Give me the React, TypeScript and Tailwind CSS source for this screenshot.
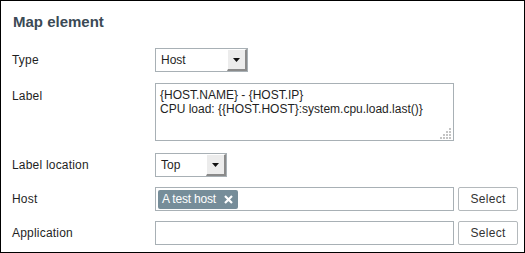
import * as React from 'react';

function Dropdown({ value, width }: { value: string; width: string }) {
	return (
		<div
			className={`flex h-[24px] ${width} border border-[#a8b0b5] bg-white items-stretch`}
		>
			<span className="flex-1 pl-[5px] leading-[22px] text-[#1f1f1f]">
				{value}
			</span>
			<span className="w-[20px] flex items-center justify-center bg-[#ececec] border-r-2 border-b-2 border-[#8a8a8a] border-l border-t border-l-white border-t-white">
				<svg width="7" height="4" viewBox="0 0 7 4">
					<path d="M0 0h7L3.5 4z" fill="#111" />
				</svg>
			</span>
		</div>
	);
}

function Row({
	label,
	children,
	top = false,
	className = '',
}: {
	label: string;
	children: React.ReactNode;
	top?: boolean;
	className?: string;
}) {
	return (
		<div className={`flex ${top ? 'items-start' : 'items-center'} ${className}`}>
			<div
				className={`w-[143px] text-[#1f1f1f] tracking-[0.2px] ${top ? 'pt-[4px]' : ''}`}
			>
				{label}
			</div>
			{children}
		</div>
	);
}

function SelectButton() {
	return (
		<button className="ml-[4px] w-[60px] h-[24px] border border-[#b4b9bc] rounded-[2px] bg-white text-[#333] tracking-[0.3px]">
			Select
		</button>
	);
}

export default function App() {
	return (
		<div
			className="w-[525px] h-[253px] border border-black bg-white pl-[11px] text-[12px] overflow-hidden"
			style={{ fontFamily: '"Liberation Sans", Arial, sans-serif' }}
		>
			{/* Header */}
			<h2 className="mt-[12px] pl-[1px] text-[15px] font-bold text-[#3b4a55] leading-[18px]">
				Map element
			</h2>

			<Row label="Type" className="mt-[17px]">
				<Dropdown value="Host" width="w-[93px]" />
			</Row>

			<Row label="Label" top className="mt-[11px]">
				<div className="w-[299px] h-[58px] border border-[#a8b0b5] bg-white relative px-[4px] pt-[4px] leading-[14px] text-[#1f1f1f]">
					<div>{'{HOST.NAME} - {HOST.IP}'}</div>
					<div>{'CPU load: {{HOST.HOST}:system.cpu.load.last()}'}</div>
					<svg
						className="absolute right-[1px] bottom-[1px]"
						width="12"
						height="12"
						viewBox="0 0 12 12"
					>
						<g fill="#c4c4c4">
							<rect x="9" y="1" width="2" height="2" />
							<rect x="6" y="4" width="2" height="2" />
							<rect x="9" y="4" width="2" height="2" />
							<rect x="3" y="7" width="2" height="2" />
							<rect x="6" y="7" width="2" height="2" />
							<rect x="9" y="7" width="2" height="2" />
							<rect x="0" y="10" width="2" height="2" />
							<rect x="3" y="10" width="2" height="2" />
							<rect x="6" y="10" width="2" height="2" />
							<rect x="9" y="10" width="2" height="2" />
						</g>
					</svg>
				</div>
			</Row>

			<Row label="Label location" className="mt-[12px]">
				<Dropdown value="Top" width="w-[72px]" />
			</Row>

			<Row label="Host" className="mt-[10px]">
				<div className="w-[299px] h-[24px] border border-[#a8b0b5] bg-white flex items-center px-[2px]">
					<span className="flex items-center h-[19px] rounded-[2px] bg-[#768d99] text-white pl-[4px] pr-[5px] tracking-[-0.2px]">
						A test host
						<svg className="ml-[8px]" width="9" height="9" viewBox="0 0 9 9">
							<path
								d="M1 1l7 7M8 1L1 8"
								stroke="#fff"
								strokeWidth="2.2"
							/>
						</svg>
					</span>
				</div>
				<SelectButton />
			</Row>

			<Row label="Application" className="mt-[10px]">
				<div className="w-[299px] h-[24px] border border-[#a8b0b5] bg-white" />
				<SelectButton />
			</Row>
		</div>
	);
}
